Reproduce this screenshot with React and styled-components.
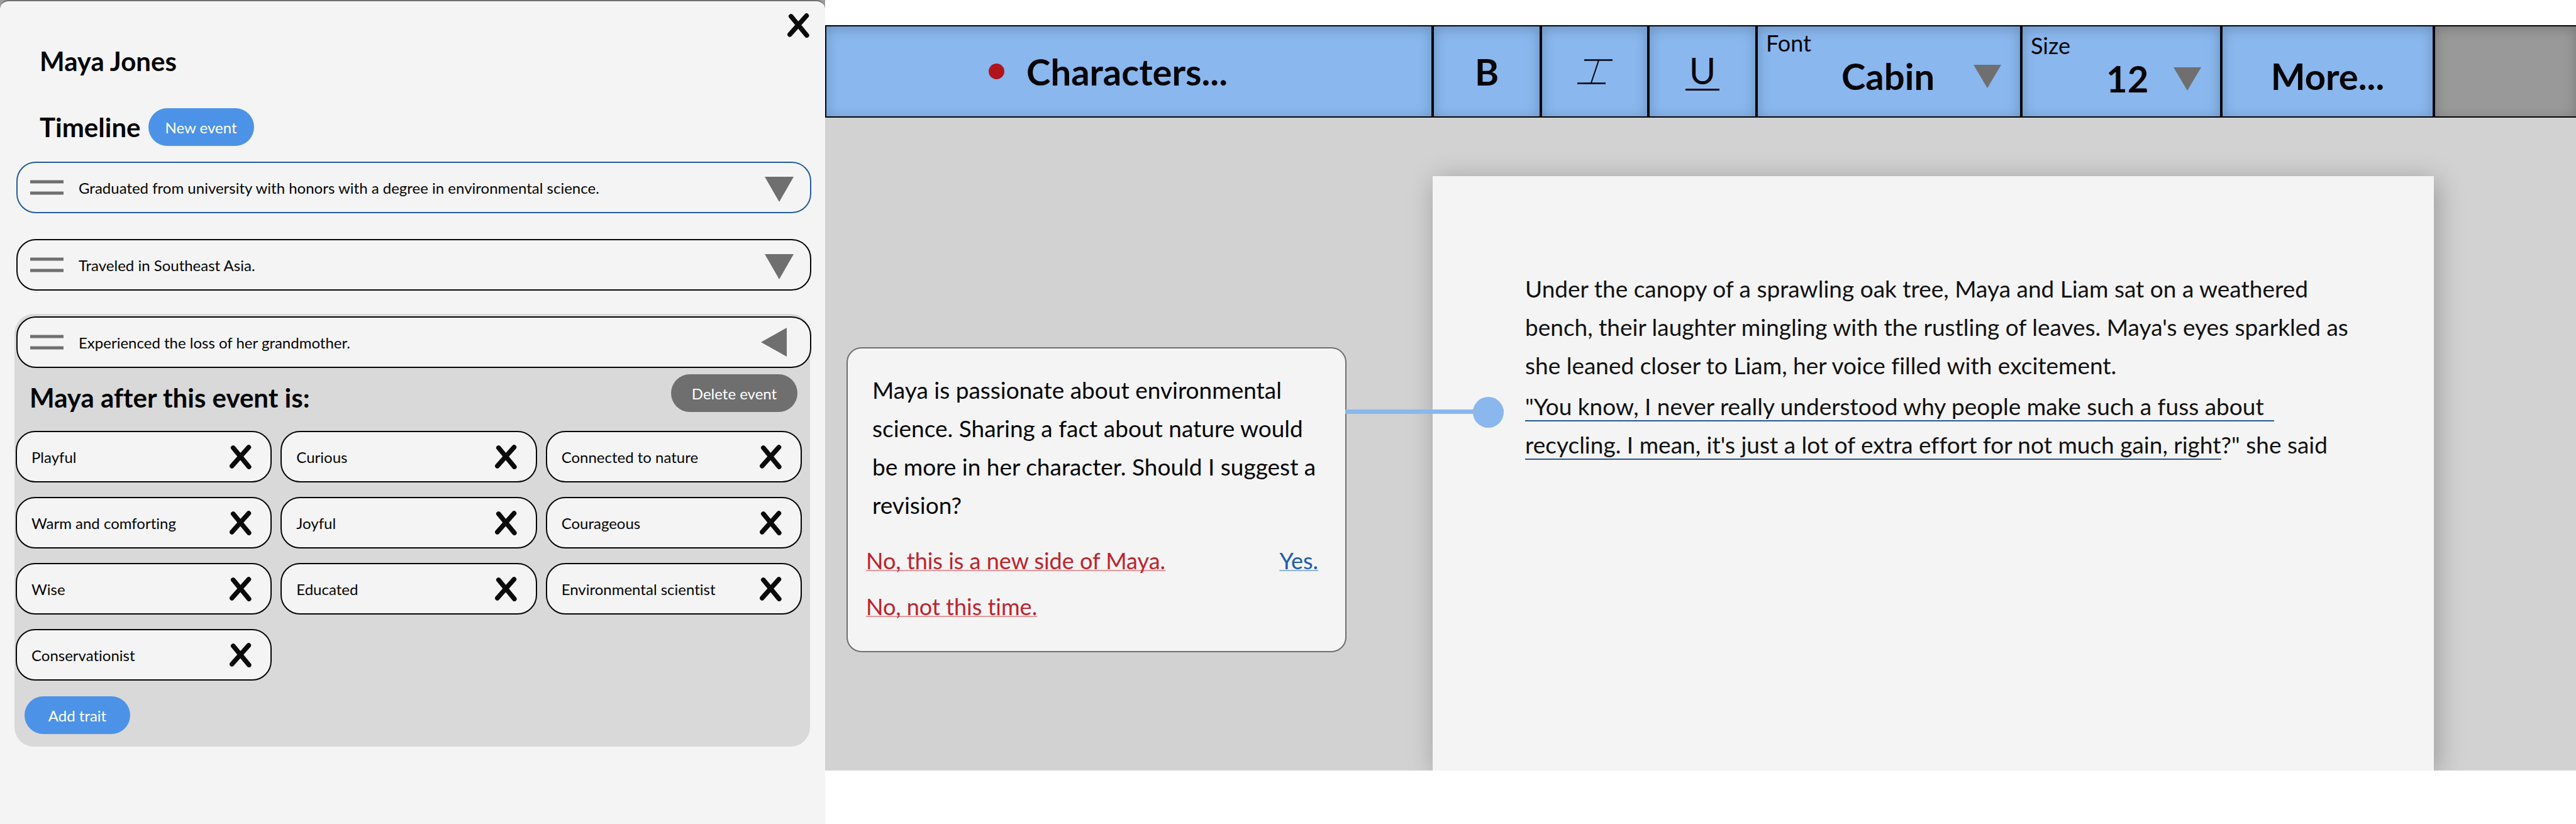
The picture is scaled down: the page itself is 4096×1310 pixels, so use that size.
import React from "react";
import styled, { createGlobalStyle } from "styled-components";

const color = {
  ink: "#050507",
  paper: "#f4f4f4",
  canvas: "#d2d2d2",
  group: "#d9d9d9",
  slate: "#6f6f6f",
  blue: "#4c93e8",
  sky: "#89b7ee",
  red: "#c0222a",
  link: "#1c5cad",
};

const GlobalStyle = createGlobalStyle`
  *, *::before, *::after { box-sizing: border-box; }
  body {
    margin: 0;
    background: #fff;
    color: ${color.ink};
    font-family: Lato, "Open Sans", sans-serif;
    font-size: 24px;
    font-variant-ligatures: none;
  }
  h1, h2, p, ul { margin: 0; padding: 0; }
  ul { list-style: none; }
  button, select { font: inherit; color: inherit; }
  button { cursor: pointer; }
  svg { display: block; }
`;

const Screen = styled.div`
  display: grid;
  grid-template-columns: minmax(0, 1312fr) minmax(0, 2784fr);
  min-height: 100vh;
`;

/* Character panel */

const Sidebar = styled.aside`
  background: #9c9c9c;
  display: flex;
`;

const Panel = styled.div`
  flex: 1;
  min-width: 0;
  display: flex;
  flex-direction: column;
  background: ${color.paper};
  border-top: 2px solid ${color.slate};
  border-radius: 14px 14px 0 0;
`;

const PanelTop = styled.div`
  display: flex;
  justify-content: flex-end;
  padding: 19px 25px 0;
`;

const IconButton = styled.button`
  display: flex;
  align-items: center;
  justify-content: ${(p) => p.$align || "center"};
  flex: none;
  width: ${(p) => p.$width || "auto"};
  padding: 0;
  border: 0;
  background: none;
`;

const Title = styled.h1`
  margin: 12px 63px 0;
  font-size: 42px;
  line-height: 50px;
  font-weight: 700;
`;

const Subtitle = styled.h2`
  font-size: 42px;
  line-height: 50px;
  font-weight: 700;
`;

const TimelineHead = styled.div`
  display: flex;
  align-items: center;
  gap: 12px;
  margin: 50px 63px 25px;
`;

const Pill = styled.button`
  height: 60px;
  min-width: ${(p) => (p.$wide ? 201 : 168)}px;
  padding: 0 26px;
  border: 0;
  border-radius: 30px;
  background: ${(p) => (p.$muted ? color.slate : color.blue)};
  color: #fff;
`;

const EventList = styled.ul`
  display: flex;
  flex-direction: column;
  gap: 41px;
  padding: 0 22px 0 26px;
`;

const EventRow = styled.div`
  display: flex;
  align-items: center;
  gap: 24px;
  height: 82px;
  padding: 0 26px 0 20px;
  border: 2px solid ${(p) => (p.$active ? "#225c9f" : color.ink)};
  border-radius: 31px;
  background: ${color.paper};
`;

const EventText = styled.span`
  flex: 1;
`;

const OpenEvent = styled.li`
  margin: -4px 2px 0 -3px;
  padding: 4px 0 20px;
  border-radius: 31px;
  background: ${color.group};

  > ${EventRow} {
    margin: 0 -2px 0 3px;
  }
`;

const OpenHead = styled.div`
  display: flex;
  justify-content: space-between;
  align-items: flex-end;
  height: 62px;
  margin: 10px 20px 28px 24px;

  > ${Pill} {
    align-self: flex-start;
  }
`;

const TraitGrid = styled.ul`
  display: grid;
  grid-template-columns: repeat(3, minmax(0, 1fr));
  gap: 23px 14px;
  padding: 0 13px 25px 2px;
`;

const Trait = styled.li`
  display: flex;
  align-items: center;
  justify-content: space-between;
  height: 82px;
  padding: 0 30px 0 23px;
  border: 2px solid ${color.ink};
  border-radius: 31px;
  background: ${color.paper};
`;

const OpenFoot = styled.div`
  display: flex;
  padding-left: 16px;
`;

/* Editor */

const Editor = styled.main`
  display: flex;
  flex-direction: column;
  padding: 40px 0 85px;
  background: #fff;
`;

const Toolbar = styled.div`
  display: grid;
  grid-template-columns: 966fr 172fr 171fr 172fr 421fr 318fr 338fr 226fr;
  height: 147px;
  font-size: 58px;
  line-height: 70px;

  > * {
    min-width: 0;
    border: 2px solid #02050c;
    border-radius: 0;
    background: ${color.sky};
    box-shadow: inset 0 3px 20px rgba(0, 0, 0, 0.22);
  }

  > :last-child {
    border-right: 0;
    background: #999;
  }
`;

const Tool = styled.button`
  display: flex;
  align-items: center;
  justify-content: center;
  gap: 35px;
  padding: ${(p) => p.$pad || "0"};
  font-weight: ${(p) => (p.$light ? 400 : 700)};
`;

const Filler = styled.div``;

const Dot = styled.span`
  width: 25px;
  height: 25px;
  border-radius: 50%;
  background: #b0151c;
`;

const Underlined = styled.span`
  padding: 0 6px;
  border-bottom: 3px solid ${color.ink};
  line-height: 58px;
`;

const Field = styled.div`
  display: flex;
  flex-direction: column;
  padding: ${(p) => p.$top}px 30px 0 13px;
`;

const FieldLabel = styled.label`
  font-size: 36px;
  line-height: 40px;
`;

const FieldRow = styled.div`
  display: flex;
  align-items: center;
`;

const Select = styled.select`
  flex: 1;
  min-width: 0;
  height: 66px;
  padding: 0 0 0 120px;
  border: 0;
  background: none;
  appearance: none;
  font-weight: 700;
  line-height: 66px;
`;

const Workspace = styled.div`
  flex: 1;
  display: grid;
  grid-template-columns: minmax(0, 966fr) minmax(0, 1592fr) minmax(0, 226fr);
  overflow: hidden;
  background: ${color.canvas};
`;

const Margin = styled.div`
  position: relative;
  z-index: 1;
  padding: 365px 137px 40px 34px;
`;

const Note = styled.section`
  position: relative;
  padding: 35px 29px 40px;
  border: 2px solid ${color.slate};
  border-radius: 24px;
  background: ${color.paper};
  font-size: 36px;
  line-height: 61px;
`;

const NoteText = styled.p`
  padding: 0 6px 0 10px;
  font-size: 37px;
`;

const Answers = styled.div`
  display: flex;
  justify-content: space-between;
  padding: 28px 14px 0 0;
`;

const Choices = styled.div`
  display: flex;
  flex-direction: column;
  align-items: flex-start;
  gap: 12px;
`;

const Answer = styled.a`
  color: ${(p) => (p.$yes ? color.link : color.red)};
  text-decoration: underline;
  text-decoration-thickness: 2px;
  text-decoration-skip-ink: none;
  text-decoration-color: ${(p) => (p.$yes ? "#8fb2dc" : "#e29a9d")};
`;

/* Runs from the note over the page edge to the passage it is about */
const Connector = styled.span`
  position: absolute;
  left: 100%;
  top: 97px;
  width: 252px;
  height: 7px;
  background: ${color.sky};

  &::after {
    content: "";
    position: absolute;
    right: 0;
    top: 50%;
    width: 49px;
    height: 49px;
    margin-top: -24px;
    border-radius: 50%;
    background: ${color.sky};
  }
`;

const Page = styled.article`
  display: flex;
  flex-direction: column;
  gap: 4px;
  margin-top: 93px;
  padding: 148px 130px 0 147px;
  background: ${color.paper};
  box-shadow: 5px 6px 40px rgba(0, 0, 0, 0.28);
  color: #111;
  font-size: 37px;
  line-height: 61px;
`;

const Marked = styled.span`
  padding-right: ${(p) => (p.$trail ? 16 : 0)}px;
  border-bottom: 2px solid #25588f;
`;

const Cross = () => (
  <svg width="35" height="39" viewBox="0 0 35 39" aria-hidden="true">
    <path
      d="M5.8 4.9 30.8 35.2M30.4 4 3.9 33.8"
      stroke="#0b0b0b"
      strokeWidth="7.6"
      strokeLinecap="round"
    />
  </svg>
);

const Handle = () => (
  <svg width="53" height="24" viewBox="0 0 53 24" aria-hidden="true">
    <path d="M0 3h53M0 21h53" stroke={color.slate} strokeWidth="5" />
  </svg>
);

const TriangleDown = () => (
  <svg width="46" height="46" viewBox="0 0 46 46" aria-hidden="true">
    <path d="M0 6h46L23 46z" fill={color.slate} />
  </svg>
);

const TriangleLeft = () => (
  <svg width="41" height="46" viewBox="0 0 41 46" aria-hidden="true">
    <path d="M41 0v46L0 23z" fill={color.slate} />
  </svg>
);

const Caret = () => (
  <svg width="44" height="37" viewBox="0 0 44 37" aria-hidden="true">
    <path d="M0 0h44L22 37z" fill={color.slate} />
  </svg>
);

const ItalicIcon = () => (
  <svg width="56" height="40" viewBox="0 0 56 40" fill="none" stroke="#02050c" aria-hidden="true">
    <path d="M11 1.5h45M0 38.5h45" strokeWidth="2.5" />
    <path d="M34 2 22 38" strokeWidth="2" />
  </svg>
);

const events = [
  { text: "Graduated from university with honors with a degree in environmental science.", active: true },
  { text: "Traveled in Southeast Asia." },
];

const traits = [
  "Playful",
  "Curious",
  "Connected to nature",
  "Warm and comforting",
  "Joyful",
  "Courageous",
  "Wise",
  "Educated",
  "Environmental scientist",
  "Conservationist",
];

export default function App() {
  return (
    <>
      <GlobalStyle />
      <Screen>
        <Sidebar>
          <Panel>
            <PanelTop>
              <IconButton aria-label="Close">
                <Cross />
              </IconButton>
            </PanelTop>
            <Title>Maya Jones</Title>
            <TimelineHead>
              <Subtitle>Timeline</Subtitle>
              <Pill>New event</Pill>
            </TimelineHead>
            <EventList>
              {events.map((event) => (
                <li key={event.text}>
                  <EventRow $active={event.active}>
                    <Handle />
                    <EventText>{event.text}</EventText>
                    <IconButton $width="52px" $align="flex-end" aria-label="Expand event">
                      <TriangleDown />
                    </IconButton>
                  </EventRow>
                </li>
              ))}
              <OpenEvent>
                <EventRow>
                  <Handle />
                  <EventText>Experienced the loss of her grandmother.</EventText>
                  <IconButton $width="52px" $align="flex-start" aria-label="Collapse event">
                    <TriangleLeft />
                  </IconButton>
                </EventRow>
                <OpenHead>
                  <Subtitle>Maya after this event is:</Subtitle>
                  <Pill $muted $wide>
                    Delete event
                  </Pill>
                </OpenHead>
                <TraitGrid>
                  {traits.map((trait) => (
                    <Trait key={trait}>
                      {trait}
                      <IconButton aria-label={`Remove ${trait}`}>
                        <Cross />
                      </IconButton>
                    </Trait>
                  ))}
                </TraitGrid>
                <OpenFoot>
                  <Pill>Add trait</Pill>
                </OpenFoot>
              </OpenEvent>
            </EventList>
          </Panel>
        </Sidebar>

        <Editor>
          <Toolbar>
            <Tool $pad="0 66px 0 0">
              <Dot />
              Characters...
            </Tool>
            <Tool>B</Tool>
            <Tool aria-label="Italic">
              <ItalicIcon />
            </Tool>
            <Tool $light>
              <Underlined>U</Underlined>
            </Tool>
            <Field $top={6}>
              <FieldLabel htmlFor="font">Font</FieldLabel>
              <FieldRow>
                <Select id="font" defaultValue="Cabin">
                  <option>Cabin</option>
                </Select>
                <Caret />
              </FieldRow>
            </Field>
            <Field $top={10}>
              <FieldLabel htmlFor="size">Size</FieldLabel>
              <FieldRow>
                <Select id="size" defaultValue="12">
                  <option>12</option>
                </Select>
                <Caret />
              </FieldRow>
            </Field>
            <Tool $pad="14px 0 0">More...</Tool>
            <Filler />
          </Toolbar>

          <Workspace>
            <Margin>
              <Note>
                <NoteText>
                  Maya is passionate about environmental science. Sharing a fact about nature would be more in her
                  character. Should I suggest a revision?
                </NoteText>
                <Answers>
                  <Choices>
                    <Answer href="#new-side">No, this is a new side of Maya.</Answer>
                    <Answer href="#not-now">No, not this time.</Answer>
                  </Choices>
                  <Answer $yes href="#revise">
                    Yes.
                  </Answer>
                </Answers>
                <Connector />
              </Note>
            </Margin>
            <Page>
              <p>
                Under the canopy of a sprawling oak tree, Maya and Liam sat on a weathered bench, their laughter
                mingling with the rustling of leaves. Maya's eyes sparkled as she leaned closer to Liam, her voice
                filled with excitement.
              </p>
              <p>
                <Marked $trail>"You know, I never really understood why people make such a fuss about</Marked>{" "}
                <Marked>recycling. I mean, it's just a lot of extra effort for not much gain, right</Marked>?" she said
              </p>
            </Page>
          </Workspace>
        </Editor>
      </Screen>
    </>
  );
}
